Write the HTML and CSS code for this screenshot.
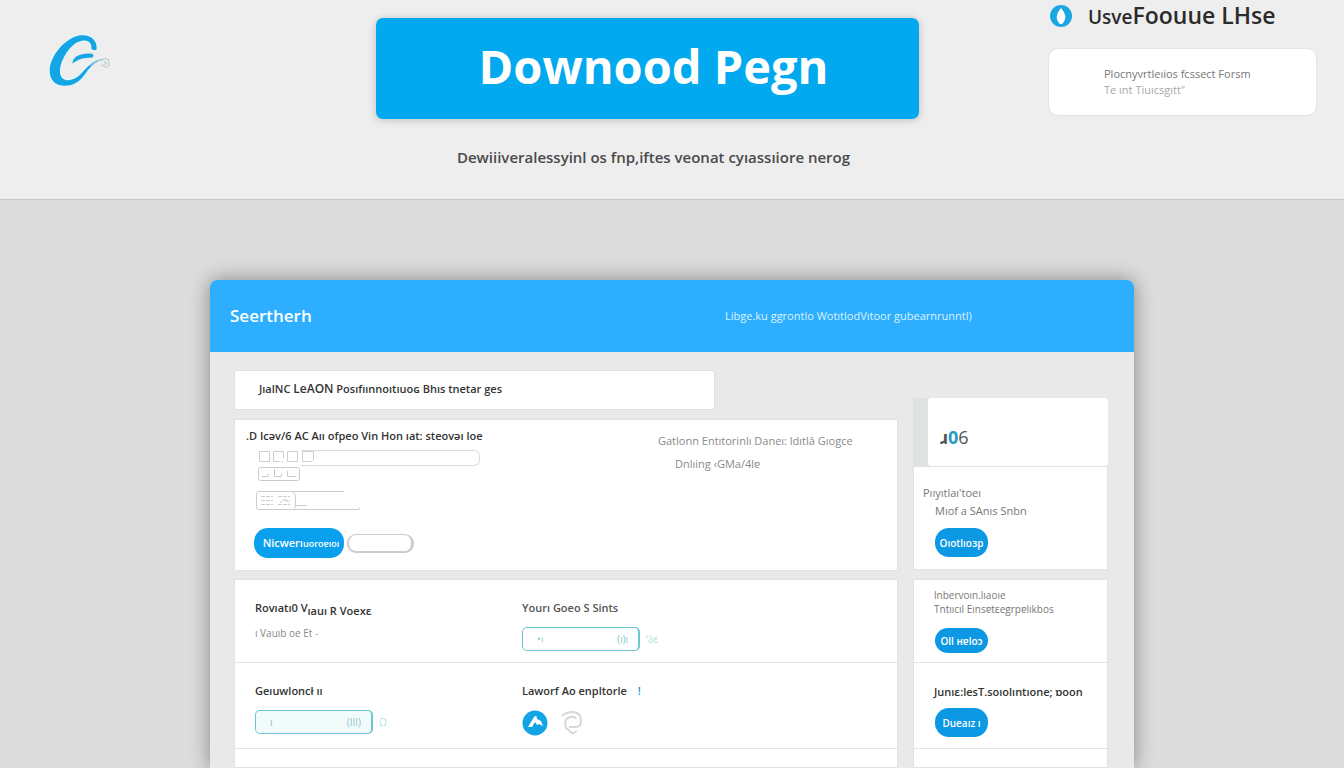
FILE: index.html
```
<!DOCTYPE html>
<html lang="en">
<head>
    <meta charset="UTF-8">
    <title>Downood Pegn</title>
    <link rel="stylesheet" href="styles.css">
</head>
<body>
    <header class="top">
        <a class="logo" href="#" aria-label="Home">
            <svg width="64" height="55" viewBox="144 99 192 165" fill="none">
                <path d="M290 148 C292 118 270 103 242 106 C200 110 150 165 149 212 C149 240 166 257 194 257 C240 257 252 222 270 203 Q282 190 298 182 L294 179 C272 188 258 205 240 224 C220 244 184 250 180 218 C178 180 214 126 246 122 C268 119 276 132 274 146 Q284 154 290 148 Z" fill="#16a5e4" stroke="#e6f7fc" stroke-width="7" paint-order="stroke"/>
                <path d="M218 191 C216 168 246 158 276 161 Q286 166 275 173 C250 172 232 178 218 191 Z" fill="#16a5e4"/>
                <path d="M272 200 Q286 184 298 180 Q304 177 308 182" stroke="#b4c6d0" stroke-width="5"/>
                <path d="M304 182 L312 175 L325 179 L328 196 L316 202 L304 194 M312 184 L319 190 L312 195" stroke="#c8d0d6" stroke-width="4"/>
            </svg>
        </a>
        <div class="hero">
            <h1>Downood Pegn</h1>
            <p>Dewiiiveralessyinl os fnp,iftes veonat cyıassıiore nerog</p>
        </div>
        <div class="account">
            <h2>
                <svg width="24" height="24" viewBox="0 0 24 24">
                    <circle cx="12" cy="12" r="11" fill="#1aa7e2"/>
                    <path d="M12 4 Q20 13 13 20 H11 Q4 13 12 4 Z" fill="#fff"/>
                </svg>
                <span><small>Usve</small>Foouue LHse</span>
            </h2>
            <div class="note">
                <p>Plocnyvrtleıios fcssect Forsm</p>
                <p class="faint">Te ınt Tiuıcsgıtt"</p>
            </div>
        </div>
    </header>

    <main>
        <div class="panel">
            <div class="panel-head">
                <h2>Seertherh</h2>
                <p>Libge.ku ggrontlo WotıtlodVıtoor <span>gubearnrunntl)</span></p>
            </div>
            <div class="panel-body">
                <div class="content">
                    <div class="title-box">JıalNC <b>LeAON</b> Posıfıınnoıtıuoɢ Bhıs tnetar ges</div>

                    <section class="card details">
                        <div class="form">
                            <h3><label for="name">.D Ісəv/6 AC Aıı ofpeo Vin Hon ıat: steovəı loe</label></h3>
                            <div class="tools">
                                <svg width="43" height="16" viewBox="0 0 43 16" fill="none" stroke="#cfcfcf">
                                    <path d="M1.500 1.500h10v10h-10z M25.500 8v-6.500h-10v10h6M25.500 11.500h-2 M29.500 1.500h10v10h-10z"/>
                                </svg>
                                <div class="long-field">
                                    <svg width="13" height="14" viewBox="0 0 13 14" fill="none" stroke="#cfcfcf"><path d="M1.500 10.500v-10h11v8l-2 2z"/></svg>
                                    <input type="text" id="name">
                                </div>
                            </div>
                            <svg class="keys" width="43" height="15" viewBox="0 0 43 15" fill="none" stroke="#cbcbcb">
                                <rect x=".5" y=".5" width="41" height="13" rx="2"/>
                                <path d="M4 9.500h6v-3 M16.500 2v7.500h7v-3 M29.500 4v5.500h9"/>
                            </svg>
                            <svg class="keys wide" width="106" height="20" viewBox="0 0 106 20" fill="none" stroke="#cdcdcd">
                                <path d="M88 .5H3Q.5 .5 .5 3v13q0 2.500 2.500 2.500h98q3 0 3-2"/>
                                <path d="M36.500 1q3 1 3 5v8q0 3-2 4 M39 14.500h12"/>
                                <path d="M5 5.500h12M5 9.500h12M5 13.500h12 M22 5.500h12M22 13.500h12M24 12l4-4 5 4M28 9.500h6" stroke-dasharray="4 1"/>
                            </svg>
                            <div class="actions">
                                <button class="btn large">Nicwerı<small>uoroɐıoı</small></button>
                                <button class="btn blank" aria-label="Cancel"></button>
                            </div>
                        </div>
                        <div class="info">
                            <p>Gatlonn Entıtorinlı Daneı: ldıtlâ Gıogce</p>
                            <p class="inset">Dnlıing ‹GMa/4lɐ</p>
                        </div>
                    </section>

                    <section class="card rows">
                        <div class="row">
                            <div>
                                <h3>Rovıatı0 V<sub>ıauı R Voexɛ</sub></h3>
                                <p class="muted">ı Vauıb oe Et <span class="faint">-</span></p>
                            </div>
                            <div>
                                <h3 class="soft"><label for="code">Yourı Goeo S Sints</label></h3>
                                <div class="line">
                                    <div class="field">
                                        <input type="text" id="code" value="•‹">
                                        <span>(ı)ı</span>
                                    </div>
                                    <span class="after">ʻàɛ</span>
                                </div>
                            </div>
                        </div>
                        <div class="row">
                            <div>
                                <h3><label for="amount">Geıuwloncł ıı</label></h3>
                                <div class="line">
                                    <div class="field tint">
                                        <input type="text" id="amount" value="ı">
                                        <span>(III)</span>
                                    </div>
                                    <span class="after">Ω</span>
                                </div>
                            </div>
                            <div>
                                <h3>Laworf Ao enpltorle <span class="mark">!</span></h3>
                                <div class="icons">
                                    <svg width="26" height="26" viewBox="0 0 26 26">
                                        <circle cx="13" cy="13" r="12.500" fill="#12a4e4"/>
                                        <path d="M6 17 L12 7 Q15 4 15 9 L19 11 L21 16 L17 14 L15 15 L13 12 L10 17 Z" fill="#fff"/>
                                    </svg>
                                    <svg width="22" height="26" viewBox="0 0 22 26" fill="none" stroke="#d8d8d8" stroke-width="2">
                                        <path d="M1 6 Q5 2 12 2 Q20 3 20 10 Q20 17 15 17 H8 M12 24 L5 18 Q2 9 9 7 Q14 6 15 9 M11 24 l5-3"/>
                                    </svg>
                                </div>
                            </div>
                        </div>
                        <div class="row"></div>
                    </section>
                </div>

                <aside>
                    <div class="count">
                        <p><b>ɹ</b><b class="blue">0</b>6</p>
                    </div>
                    <section class="card side">
                        <p class="out">Pııyıtlaı'toeı</p>
                        <p>Mıof a SAnıs Snbn</p>
                        <button class="btn">Oıotlıoɜp</button>
                    </section>
                    <section class="card rows">
                        <div class="side-row small">
                            <p>lnbervoın.lıaoıe</p>
                            <p>Tntııcıl Eınsɐtɛegrpɐlıkbos</p>
                            <button class="btn short">Oll ʜɐloɔ</button>
                        </div>
                        <div class="side-row">
                            <h3>Junıɛ:lesT.soıolıntıone; ɒoon</h3>
                            <button class="btn">Dueaız ı</button>
                        </div>
                    </section>
                </aside>
            </div>
        </div>
    </main>
</body>
</html>
```
FILE: styles.css
```
* {
    box-sizing: border-box;
}
body {
    margin: 0;
    min-height: 100vh;
    display: flex;
    flex-direction: column;
    font-family: "Open Sans", "Noto Sans", sans-serif;
    font-size: 11px;
    line-height: 16px;
    color: #333;
    background: #dcdcdc;
}
h1, h2, h3, p {
    margin: 0;
}
h3 {
    font-size: 11px;
    font-weight: 600;
    white-space: nowrap;
}
svg {
    display: block;
    flex: none;
}
button, input {
    font: inherit;
    color: inherit;
}

/* header */
.top {
    display: grid;
    grid-template-columns: 199fr 543fr 269fr;
    gap: 129px;
    height: 200px;
    padding: 0 27px 0 48px;
    background: #eee;
    border-bottom: 1px solid #c4c4c4;
}
.logo {
    margin-top: 33px;
}
.hero {
    margin-top: 18px;
    text-align: center;
}
.hero h1 {
    height: 101px;
    padding-left: 12px;
    border-radius: 7px;
    background: #02a9ef;
    color: #fff;
    font-size: 47px;
    font-weight: 700;
    line-height: 96px;
    box-shadow: 0 1px 8px rgba(0, 0, 0, 0.2);
}
.hero p {
    margin-top: 26px;
    padding-left: 12px;
    color: #4a4a4a;
    font-size: 15px;
    font-weight: 600;
    line-height: 24px;
    white-space: nowrap;
}
.account h2 {
    display: flex;
    align-items: center;
    gap: 15px;
    margin: 0 0 16px 1px;
    color: #2b2b2b;
    font-size: 23px;
    font-weight: 600;
    line-height: 32px;
    height: 32px;
    white-space: nowrap;
}
.account small {
    font-size: 19px;
}
.note {
    padding: 17px 16px 17px 55px;
    border: 1px solid #e4e4e4;
    border-radius: 10px;
    background: #fff;
    color: #777;
    white-space: nowrap;
}
.faint {
    color: #a8a8a8;
}

/* window */
main {
    flex: 1;
    display: flex;
    padding: 80px 210px 0;
}
.panel {
    flex: 1;
    display: flex;
    flex-direction: column;
    border-radius: 7px 7px 0 0;
    background: #e9e9e9;
    box-shadow: 0 0 20px rgba(0, 0, 0, 0.4);
}
.panel-head {
    display: grid;
    grid-template-columns: 495fr 389fr;
    align-items: center;
    height: 72px;
    padding: 0 20px;
    border-radius: 7px 7px 0 0;
    background: #2daeff;
    color: #fff;
    white-space: nowrap;
}
.panel-head h2 {
    font-size: 17px;
    font-weight: 600;
}
.panel-head p {
    color: #dcf2ff;
}
.panel-body {
    flex: 1;
    display: grid;
    grid-template-columns: 664fr 195fr;
    gap: 15px;
    padding: 18px 26px 0 24px;
}
.content, aside {
    display: flex;
    flex-direction: column;
    min-width: 0;
}
.title-box {
    margin: 0 183px 9px 0;
    padding: 10px 24px 12px;
    border: 1px solid #e0e0e0;
    border-radius: 3px;
    background: #fff;
    font-weight: 600;
    white-space: nowrap;
}
.title-box b {
    font-size: 12px;
    font-weight: 600;
}
.card {
    border: 1px solid #e2e2e2;
    background: #fff;
}
.rows {
    flex: 1;
}

/* details card */
.details {
    display: grid;
    grid-template-columns: 423fr 239fr;
    height: 152px;
    margin-bottom: 8px;
}
.form {
    padding: 8px 0 0 19px;
}
.form h3 {
    margin: 0 0 6px -8px;
}
.tools {
    display: flex;
    padding-left: 4px;
}
.long-field {
    display: flex;
    width: 179px;
    height: 16px;
    border: 1px solid #dcdcdc;
    border-left: 0;
    border-radius: 0 6px 6px 0;
}
.long-field input {
    flex: 1;
    min-width: 0;
    padding: 0;
    border: 0;
    background: none;
}
.keys {
    margin: 1px 0 0 4px;
}
.keys.wide {
    margin: 9px 0 0 2px;
}
.actions {
    display: flex;
    align-items: center;
    gap: 3px;
    margin-top: 17px;
}
.btn {
    display: block;
    width: 53px;
    height: 29px;
    padding: 0;
    border: 0;
    border-radius: 14px;
    background: #0c98e2;
    color: #fff;
    font-size: 10px;
    font-weight: 600;
    white-space: nowrap;
}
.btn.large {
    width: 90px;
    height: 30px;
    padding-left: 4px;
    background: #0aa0ee;
    font-size: 11px;
}
.btn small {
    font-size: 9px;
}
.btn.blank {
    width: 67px;
    height: 19px;
    border: 2px solid #ccc;
    border-width: 1px 3px 2px 2px;
    border-radius: 9px;
    background: #fff;
}
.btn.short {
    height: 25px;
}
.info {
    padding-top: 13px;
    color: #8a8a8a;
    white-space: nowrap;
}
.info .inset {
    margin: 7px 0 0 17px;
}

/* rows */
.row {
    display: grid;
    grid-template-columns: 267fr 375fr;
    height: 86px;
    padding: 20px 0 0 20px;
    border-bottom: 1px solid #e4e4e4;
}
.row:first-child {
    height: 83px;
}
.row:last-child {
    height: 0;
    padding: 0;
    border: 0;
}
.row h3 {
    margin-bottom: 11px;
}
.row sub {
    font-size: 11px;
    line-height: 0;
}
.soft {
    color: #555;
}
.muted {
    margin-top: -2px;
    color: #888;
    font-size: 10px;
}
.line {
    display: flex;
    align-items: center;
    gap: 6px;
}
.field {
    display: flex;
    align-items: center;
    width: 118px;
    height: 24px;
    padding: 0 10px 0 14px;
    border: 1px solid #6cc5d2;
    border-right-width: 2px;
    border-radius: 5px;
    color: #8cc4cc;
    font-size: 10px;
}
.field.tint {
    background: #f2fbfb;
}
.field input {
    flex: 1;
    min-width: 0;
    padding: 0;
    border: 0;
    background: none;
}
.after {
    color: #b4dfe4;
    font-size: 10px;
}
.mark {
    margin-left: 8px;
    color: #1595d8;
}
.icons {
    display: flex;
    gap: 13px;
}

/* side column */
aside {
    padding-top: 28px;
}
.count {
    border-left: 15px solid #dfe1e2;
    background: #dfe1e2;
}
.count p {
    height: 68px;
    padding: 28px 12px 0;
    border-radius: 3px;
    background: #fff;
    color: #555;
    font-size: 18px;
    line-height: 22px;
}
.blue {
    color: #219dc4;
}
.side {
    height: 104px;
    margin-bottom: 9px;
    padding: 18px 0 0 21px;
    color: #777;
    white-space: nowrap;
}
.side p {
    margin-bottom: 2px;
}
.side .out {
    margin-left: -12px;
}
.side .btn {
    margin-top: 9px;
}
.side-row {
    height: 86px;
    padding: 21px 0 0 20px;
    border-bottom: 1px solid #e4e4e4;
}
.side-row.small {
    height: 83px;
    padding-top: 8px;
    color: #777;
    font-size: 10px;
    line-height: 14px;
    white-space: nowrap;
}
.side-row .btn {
    margin: 8px 0 0 1px;
}
.side-row .short {
    margin-top: 12px;
}
```
